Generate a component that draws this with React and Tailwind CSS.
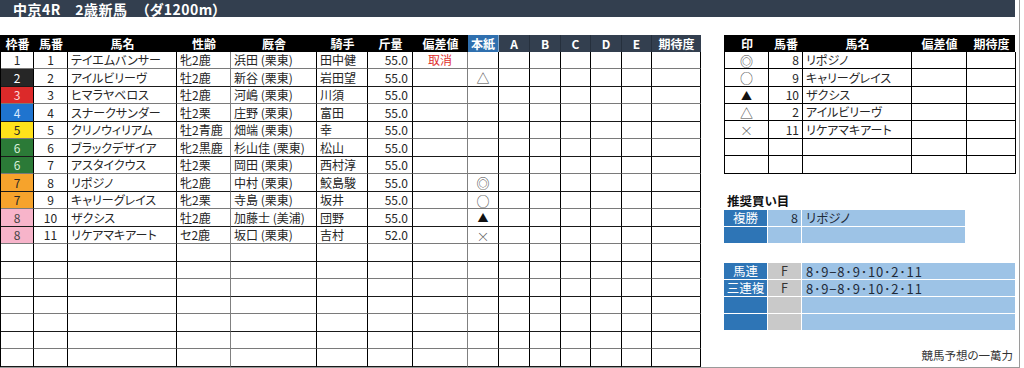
import React from "react";

const MAIN_COLS =
  "grid grid-cols-[33px_34px_109px_54px_86px_51px_45px_55px_31px_31px_31px_30px_31px_30px_49px]";
const SIDE_COLS = "grid grid-cols-[44px_34px_109px_55px_49px]";

const FRAME = {
  1: "bg-white text-[#262626]",
  2: "bg-[#262626] text-white",
  3: "bg-[#dc2a2a] text-[#ffd9d9]",
  4: "bg-[#1f74cf] text-[#dbe9ff]",
  5: "bg-[#ffe21a] text-[#262626]",
  6: "bg-[#2b7a37] text-[#d8f0d8]",
  7: "bg-[#f6a32c] text-[#262626]",
  8: "bg-[#f7b4ca] text-[#444]",
};

const HORSES = [
  [1, 1, "テイエムバンサー", "牝2鹿", "浜田 (栗東)", "田中健", "55.0", "取消", ""],
  [2, 2, "アイルビリーヴ", "牡2鹿", "新谷 (栗東)", "岩田望", "55.0", "", "△"],
  [3, 3, "ヒマラヤベロス", "牡2鹿", "河嶋 (栗東)", "川須", "55.0", "", ""],
  [4, 4, "スナークサンダー", "牡2栗", "庄野 (栗東)", "富田", "55.0", "", ""],
  [5, 5, "クリノウィリアム", "牡2青鹿", "畑端 (栗東)", "幸", "55.0", "", ""],
  [6, 6, "ブラックデザイア", "牝2黒鹿", "杉山佳 (栗東)", "松山", "55.0", "", ""],
  [6, 7, "アスタイクウス", "牡2栗", "岡田 (栗東)", "西村淳", "55.0", "", ""],
  [7, 8, "リポジノ", "牝2鹿", "中村 (栗東)", "鮫島駿", "55.0", "", "◎"],
  [7, 9, "キャリーグレイス", "牝2栗", "寺島 (栗東)", "坂井", "55.0", "", "○"],
  [8, 10, "ザクシス", "牡2鹿", "加藤士 (美浦)", "団野", "55.0", "", "▲"],
  [8, 11, "リケアマキアート", "セ2鹿", "坂口 (栗東)", "吉村", "52.0", "", "×"],
];

const PICKS = [
  ["◎", "8", "リポジノ"],
  ["○", "9", "キャリーグレイス"],
  ["▲", "10", "ザクシス"],
  ["△", "2", "アイルビリーヴ"],
  ["×", "11", "リケアマキアート"],
  ["", "", ""],
  ["", "", ""],
];

function Mark({ m }) {
  if (!m) return null;
  if (m === "▲") return <span className="text-[11px] leading-none text-[#111]">▲</span>;
  if (m === "×") return <span className="text-[13px] leading-none text-[#555] font-light">×</span>;
  return <span className="text-[13px] leading-none text-[#444]">{m}</span>;
}

function HCell({ children, className = "" }) {
  return (
    <div className={`flex items-center justify-center font-bold text-white ${className}`}>
      {children}
    </div>
  );
}

function MainTable() {
  const rows = [];
  for (let i = 0; i < 18; i++) {
    rows.push(HORSES[i] || null);
  }
  return (
    <div className="w-[700px] border-l border-black">
      <div className={`${MAIN_COLS} h-[17px]`}>
        {["枠番", "馬番", "馬名", "性齢", "厩舎", "騎手", "斤量", "偏差値"].map((t) => (
          <HCell key={t} className="bg-black">
            {t}
          </HCell>
        ))}
        <HCell className="bg-[#2f6fae] border-r border-white/40">本紙</HCell>
        {["A", "B", "C", "D", "E"].map((t) => (
          <HCell key={t} className="bg-[#333f4f] border-r border-[#26303d]">
            {t}
          </HCell>
        ))}
        <HCell className="bg-[#333f4f]">期待度</HCell>
      </div>
      {rows.map((r, i) => {
        const h = i % 2 === 0 ? "h-[17px]" : "h-[18px]";
        const hb = i % 2 === 0 ? "border-b-[#7a7a7a]" : "border-b-[#1a1a1a]";
        const c = `border-r border-b border-r-black ${hb} flex items-center`;
        const cg = `border-r border-b border-r-[#808080] ${hb} flex items-center`;
        return (
          <div key={i} className={`${MAIN_COLS} ${h} text-[#262626]`}>
            <div className={`${c} justify-center ${r ? FRAME[r[0]] : ""}`}>{r ? r[0] : ""}</div>
            <div className={`${c} justify-center`}>{r ? r[1] : ""}</div>
            <div className={`${c} pl-[3px] whitespace-nowrap`}>{r ? r[2] : ""}</div>
            <div className={`${cg} pl-[3px] whitespace-nowrap`}>{r ? r[3] : ""}</div>
            <div className={`${c} pl-[3px] whitespace-nowrap`}>{r ? r[4] : ""}</div>
            <div className={`${c} pl-[3px] whitespace-nowrap`}>{r ? r[5] : ""}</div>
            <div className={`${c} justify-end pr-[4px]`}>{r ? r[6] : ""}</div>
            <div className={`${cg} justify-center text-[#e0302e]`}>{r ? r[7] : ""}</div>
            <div className={`${c} justify-center`}>
              <Mark m={r ? r[8] : ""} />
            </div>
            <div className={c}></div>
            <div className={c}></div>
            <div className={c}></div>
            <div className={c}></div>
            <div className={c}></div>
            <div className={c}></div>
          </div>
        );
      })}
    </div>
  );
}

function SideTable() {
  return (
    <div className="w-[291px] border-l border-black">
      <div className={`${SIDE_COLS} h-[17px] bg-black`}>
        {["印", "馬番", "馬名", "偏差値", "期待度"].map((t) => (
          <HCell key={t}>{t}</HCell>
        ))}
      </div>
      {PICKS.map((p, i) => {
        const h = [17, 18, 17, 17, 18, 17, 18][i] === 17 ? "h-[17px]" : "h-[18px]";
        const c = "border-r border-b border-black flex items-center";
        return (
          <div key={i} className={`${SIDE_COLS} ${h} text-[#262626]`}>
            <div className={`${c} justify-center`}>
              <Mark m={p[0]} />
            </div>
            <div className={`${c} justify-end pr-[3px]`}>{p[1]}</div>
            <div className={`${c} pl-[3px] whitespace-nowrap`}>{p[2]}</div>
            <div className={c}></div>
            <div className={c}></div>
          </div>
        );
      })}
    </div>
  );
}

function BetBlock({ cols, rows, midGray }) {
  return (
    <div>
      {rows.map((r, i) => (
        <div key={i} className={`${cols} h-[17px]`}>
          <div className="bg-[#2e75b6] border-r border-b border-white flex items-center justify-center text-white text-[12.5px]">
            {r[0]}
          </div>
          <div
            className={`${
              midGray
                ? "bg-[#c9c9c9] justify-center text-[#333] text-[12.5px]"
                : "bg-[#9dc3e6] justify-end pr-[3px] text-[#1f2a38] text-[12.5px]"
            } border-r border-b border-white flex items-center`}
          >
            {r[1]}
          </div>
          <div
            className={`bg-[#9dc3e6] border-b border-white flex items-center pl-[4px] text-[#1f2a38] whitespace-nowrap ${
              midGray ? "text-[13px] tracking-[0.8px]" : "text-[12.5px]"
            }`}
          >
            {r[2]}
          </div>
        </div>
      ))}
    </div>
  );
}

export default function App() {
  return (
    <div className="w-[1024px] h-[368px] bg-white overflow-hidden font-['Noto_Sans_CJK_JP',sans-serif] text-[12px] leading-none [font-feature-settings:'palt']">
      <div className="w-[1020px] h-[368px] border-r border-b border-[#9a9a9a]">
        <div className="w-[1015px] h-[17px] bg-[#333f4f] flex items-center pl-[13px] text-white font-bold text-[14px] tracking-[0.5px] whitespace-pre">
          {"中京4R　2歳新馬　（ダ1200m）"}
        </div>
        <div className="h-[18px]"></div>
        <div className="flex gap-[24px]">
          <MainTable />
          <div className="w-[291px] flex flex-col">
            <SideTable />
            <div className="h-[36px] flex items-end pb-[3px] pl-[3px] font-bold text-[12.5px] text-[#111]">
              推奨買い目
            </div>
            <BetBlock
              cols="grid grid-cols-[44px_34px_163px]"
              rows={[
                ["複勝", "8", "リポジノ"],
                ["", "", ""],
              ]}
            />
            <div className="h-[19px]"></div>
            <BetBlock
              cols="grid grid-cols-[44px_34px_213px]"
              midGray
              rows={[
                ["馬連", "F", "8･9−8･9･10･2･11"],
                ["三連複", "F", "8･9−8･9･10･2･11"],
                ["", "", ""],
                ["", "", ""],
              ]}
            />
            <div className="mt-[19px] text-right pr-[2px] text-[11.5px] text-[#333]">競馬予想の一萬力</div>
          </div>
        </div>
      </div>
    </div>
  );
}
